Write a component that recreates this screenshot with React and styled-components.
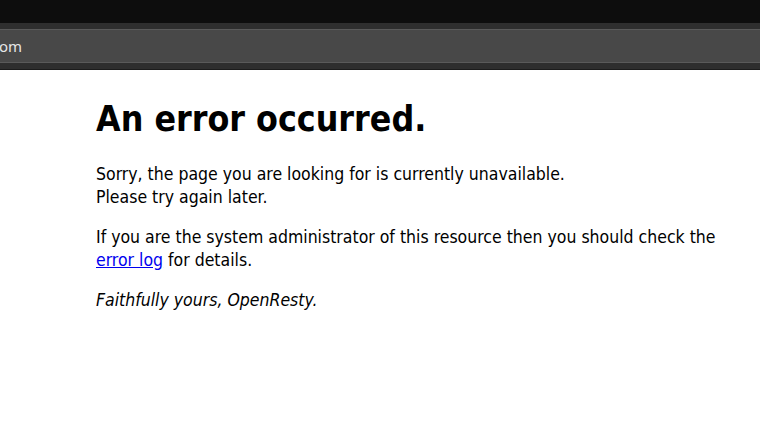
import React from "react";
import styled, { createGlobalStyle } from "styled-components";

// --- Components --- //

const App = () => {
  return (
    <>
      <GlobalStyle />
      <StyledChrome>
        <div className="tabs" />
        <div className="toolbar">
          <div className="address">om</div>
        </div>
      </StyledChrome>
      <StyledPage>
        <h1>An error occurred.</h1>
        <p>
          Sorry, the page you are looking for is currently unavailable.
          <br />
          Please try again later.
        </p>
        <p>
          If you are the system administrator of this resource then you should
          check the <a href="#">error log</a> for details.
        </p>
        <p>
          <em>Faithfully yours, OpenResty.</em>
        </p>
      </StyledPage>
    </>
  );
};

export default App;

// --- Styles --- //

const GlobalStyle = createGlobalStyle`
  html, body {
    margin: 0;
    padding: 0;
    background: #ffffff;
    overflow: hidden;
  }
`;

const StyledChrome = styled.header`
  background-color: #0d0d0d;
  .tabs {
    height: 23px;
  }
  .toolbar {
    background-color: #2e2e2e;
    padding: 6px 0 6px 0;
    border-bottom: solid 1px #1c1c1c;
  }
  .address {
    height: 34px;
    box-sizing: border-box;
    background-color: #484848;
    border-top: solid 1px #5a5a5a;
    border-bottom: solid 1px #5a5a5a;
    color: #e6e6e6;
    font-family: "Noto Sans", "Liberation Sans", sans-serif;
    font-size: 15px;
    line-height: 33px;
    margin-left: -1px;
  }
`;

const StyledPage = styled.main`
  width: 640px;
  margin-left: 96px;
  padding-top: 3px;
  font-family: "DejaVu Sans Condensed", "DejaVu Sans", sans-serif;
  font-size: 17.5px;
  line-height: 23px;
  color: #000000;
  h1 {
    font-size: 35.4px;
    line-height: 44px;
    margin: 24px 0 22px;
  }
  p {
    margin: 17px 0;
  }
  a {
    color: #0000ee;
  }
`;
